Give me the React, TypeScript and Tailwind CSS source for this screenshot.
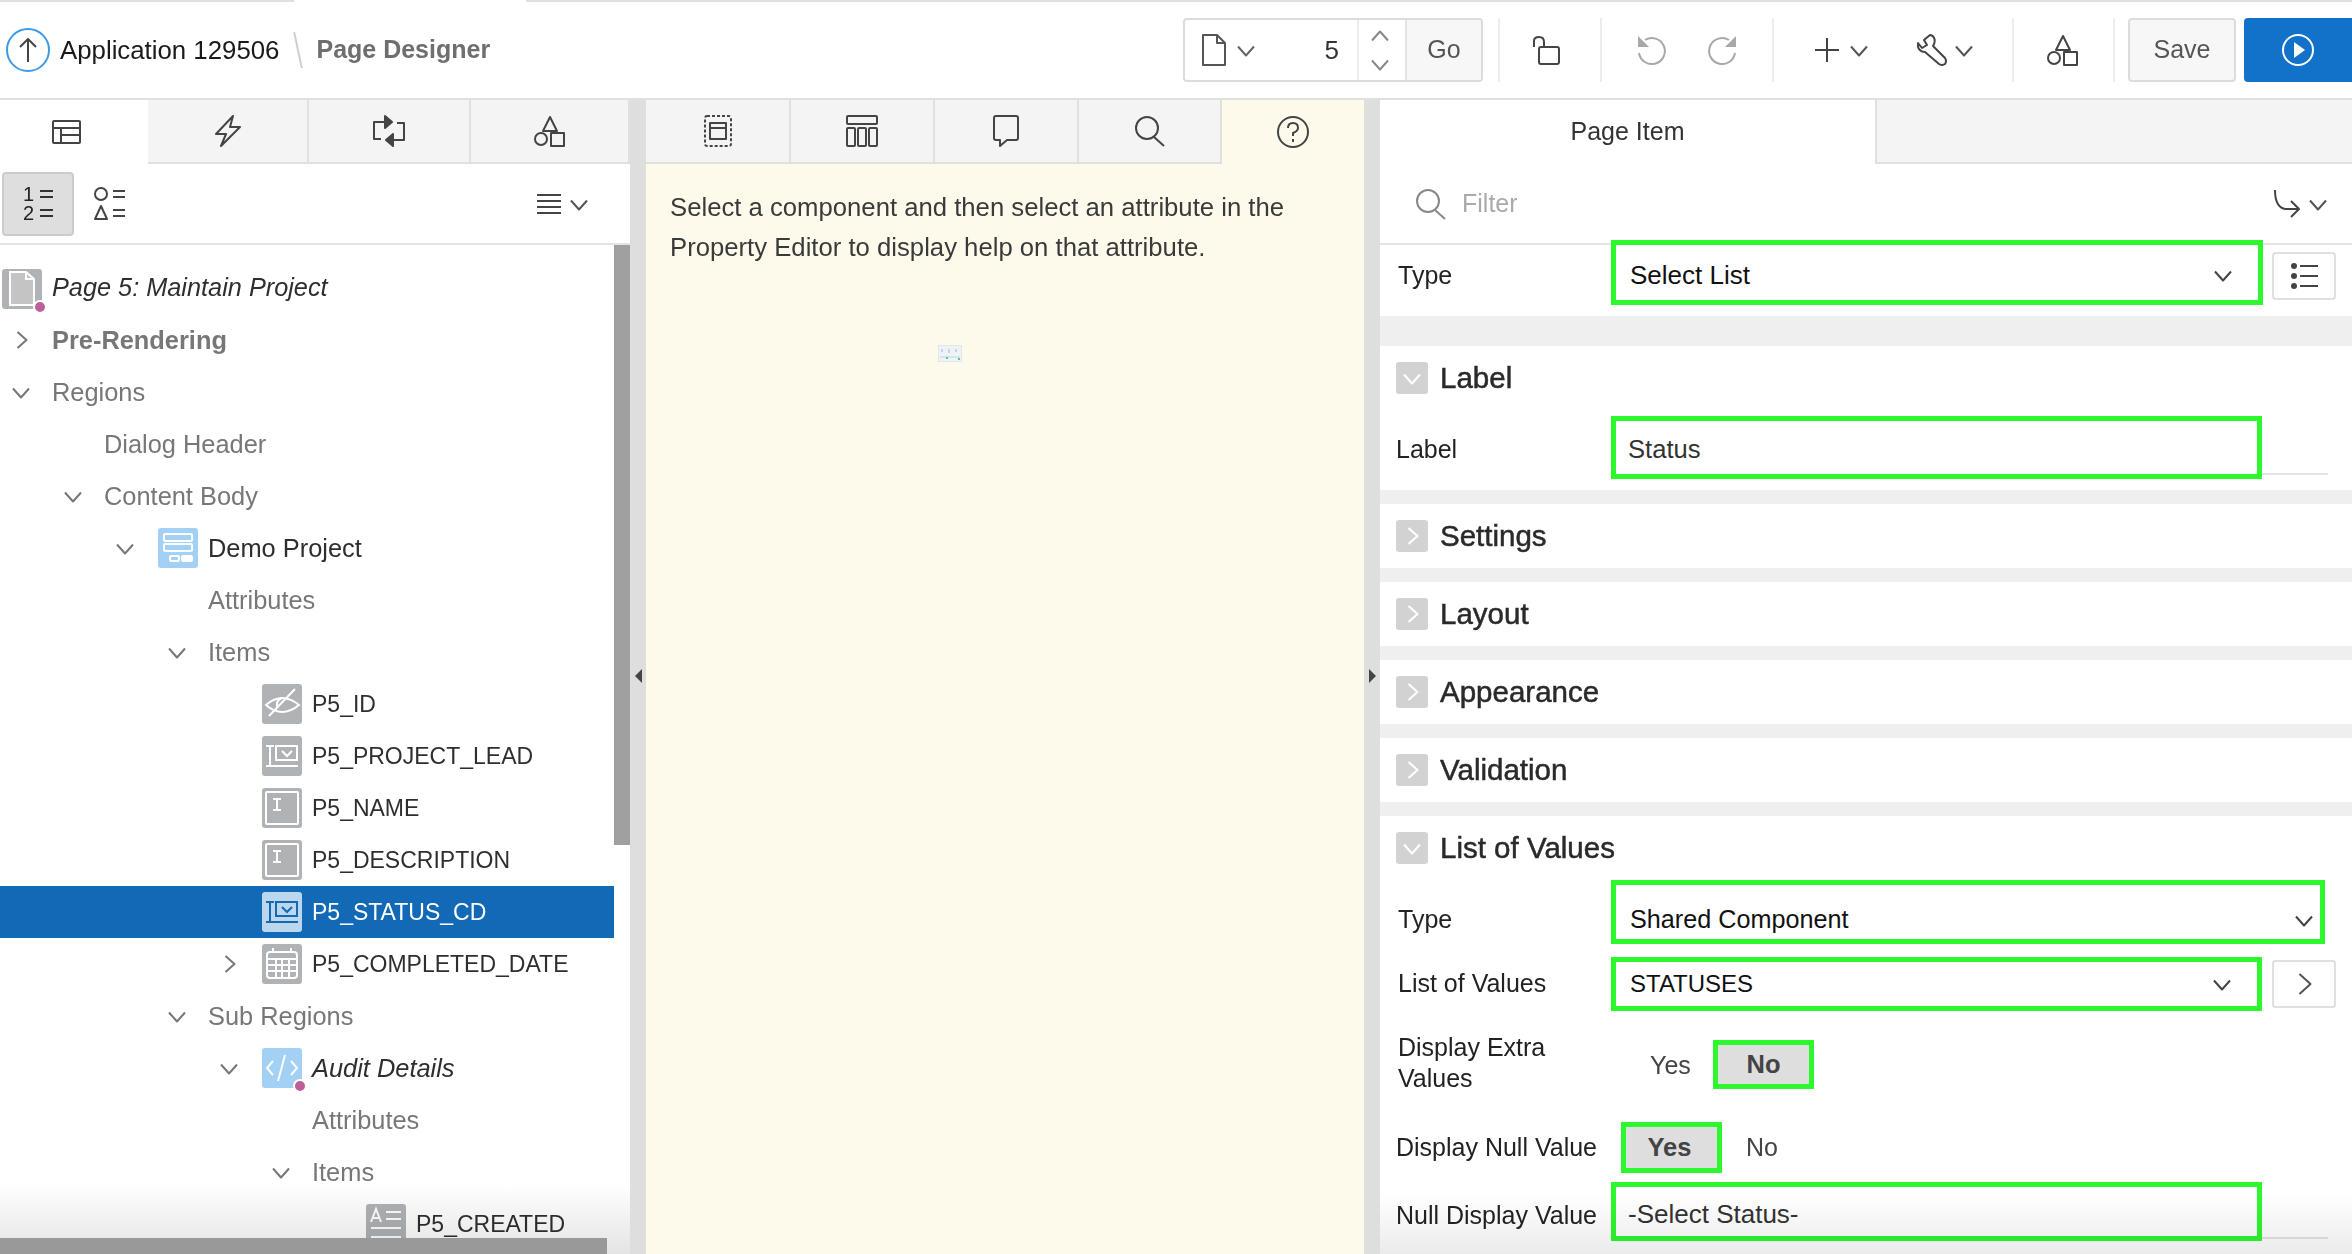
import type { ReactNode } from 'react';

function Svg({ w, h, children, className = '' }: { w: number; h: number; children: ReactNode; className?: string }) {
  return (
    <svg width={w} height={h} viewBox={`0 0 ${w} ${h}`} fill="none" stroke="currentColor" strokeWidth={2} strokeLinejoin="round" className={`shrink-0 ${className}`}>
      {children}
    </svg>
  );
}

function Chevron({ dir = 'down', size = 18, className = 'text-[#666666]' }: { dir?: 'down' | 'right' | 'up'; size?: number; className?: string }) {
  const half = size / 2;
  const q = size / 4;
  const d =
    dir === 'down'
      ? `M1 ${q + 1} L${half} ${size - q + 1} L${size - 1} ${q + 1}`
      : dir === 'up'
        ? `M1 ${size - q} L${half} ${q} L${size - 1} ${size - q}`
        : `M${q + 1} 1 L${size - q + 1} ${half} L${q + 1} ${size - 1}`;
  return (
    <Svg w={size} h={size} className={className}>
      <path d={d} />
    </Svg>
  );
}

function ShapesIcon() {
  return (
    <Svg w={32} h={32} className="text-[#444444]">
      <path d="M16 2 L23 16 L9 16 Z" />
      <circle cx={7} cy={24} r={6} />
      <rect x={17} y={18} width={13} height={13} />
    </Svg>
  );
}

function SearchIcon({ className }: { className: string }) {
  return (
    <Svg w={31} h={32} className={className}>
      <circle cx={13} cy={13} r={11} />
      <path d="M20 22 L30 31" />
    </Svg>
  );
}

function Separator() {
  return <div className="w-[2px] h-16 bg-[#ededed] shrink-0" />;
}

function Toolbar() {
  return (
    <div>
      <div className="flex h-[2px]">
        <div className="w-[294px] bg-[#e0e0e0]" />
        <div className="w-[232px] bg-white" />
        <div className="flex-1 bg-[#e0e0e0]" />
      </div>
      <div className="h-[98px] border-b-2 border-[#e0e0e0] flex items-center">
        <div className="ml-[6px] w-11 h-11 rounded-full border-2 border-[#3e9ae4] flex items-center justify-center text-[#444444] shrink-0">
          <Svg w={20} h={26}>
            <path d="M10 25 V2 M2 10 L10 2 L18 10" />
          </Svg>
        </div>
        <span className="ml-[10px] text-[25.8px] text-[#1a1a1a]">Application 129506</span>
        <div className="ml-[18px] w-[2px] h-9 bg-[#cfcfcf] skew-x-12" />
        <span className="ml-[17px] text-[25px] font-bold text-[#6e6e6e]">Page Designer</span>

        <div className="ml-auto w-[300px] h-16 border-2 border-[#dcdcdc] rounded flex items-stretch shrink-0">
          <div className="flex items-center pl-[17px] w-[172px]">
            <Svg w={24} h={32} className="text-[#555555]">
              <path d="M1 1 H15 L23 9 V31 H1 Z M15 1 V9 H23" />
            </Svg>
            <Chevron className="ml-[11px] text-[#666666]" />
            <span className="ml-auto mr-[18px] text-[26px] text-[#333333]">5</span>
          </div>
          <div className="w-[48px] border-l-2 border-[#ededed] pr-[4px] flex flex-col items-center justify-center gap-[10px]">
            <Chevron dir="up" className="text-[#888888]" />
            <Chevron className="text-[#888888]" />
          </div>
          <div className="flex-1 border-l-2 border-[#e4e4e4] bg-[#f7f7f7] flex items-center justify-center text-[25px] text-[#555555]">Go</div>
        </div>

        <div className="ml-[15px]"><Separator /></div>
        <div className="w-[100px] flex justify-center pr-[8px] text-[#444444]">
          <Svg w={27} h={29}>
            <path d="M1 11 V5 Q1 1 6 1 Q11 1 11 6 V11" />
            <rect x={6} y={11} width={20} height={17} rx={2} />
          </Svg>
        </div>
        <Separator />
        <div className="w-[170px] flex justify-center gap-[40px] text-[#a8a8a8]">
          <Svg w={30} h={32}>
            <path d="M8 6 A13 13 0 1 1 2 19" />
            <path d="M1 2 V13 H12 Z" fill="currentColor" stroke="none" />
          </Svg>
          <Svg w={30} h={32}>
            <path d="M22 6 A13 13 0 1 0 28 19" />
            <path d="M29 2 V13 H18 Z" fill="currentColor" stroke="none" />
          </Svg>
        </div>
        <Separator />
        <div className="w-[238px] flex items-center text-[#444444]">
          <div className="ml-[41px]">
            <Svg w={24} h={24}>
              <path d="M12 0 V24 M0 12 H24" />
            </Svg>
          </div>
          <Chevron className="ml-[11px] text-[#555555]" />
          <div className="ml-[49px]">
            <Svg w={31} h={32}>
              <path d="M13 1 L7 6 L10 11 L5 14 L1 9 C0 14 3 18 8 18 L22 30 Q25 32 28 30 Q30 27 28 24 L16 12 C19 7 18 2 13 1 Z" />
            </Svg>
          </div>
          <Chevron className="ml-[7px] text-[#555555]" />
        </div>
        <Separator />
        <div className="w-[99px] flex justify-center pr-[2px]"><ShapesIcon /></div>
        <Separator />
        <div className="ml-[13px] w-[108px] h-16 border-2 border-[#dcdcdc] rounded bg-[#f7f7f7] flex items-center justify-center text-[25px] text-[#555555] shrink-0">Save</div>
        <div className="ml-[8px] w-[108px] h-16 rounded-l bg-[#1271c8] flex items-center justify-center text-white shrink-0">
          <Svg w={32} h={32}>
            <circle cx={16} cy={16} r={15} />
            <path d="M12 8 L23 16 L12 24 Z" fill="currentColor" stroke="none" />
          </Svg>
        </div>
      </div>
    </div>
  );
}

function Tab({ active = false, width, children, bg = 'bg-white' }: { active?: boolean; width: string; children: ReactNode; bg?: string }) {
  return (
    <div
      className={`${width} h-16 flex items-center justify-center text-[#444444] ${
        active ? bg : 'bg-[#f4f4f4] border-b-2 border-r-2 border-[#e0e0e0]'
      }`}
    >
      {children}
    </div>
  );
}

const LEVEL_PAD: Record<number, string> = {
  0: 'pl-0',
  1: 'pl-[52px]',
  2: 'pl-[104px]',
  3: 'pl-[156px]',
  4: 'pl-[208px]',
  5: 'pl-[260px]',
  6: 'pl-[312px]',
};

type TreeRow = {
  label: string;
  level: number;
  arrow?: 'down' | 'right';
  icon?: ReactNode;
  tone?: 'muted' | 'ink' | 'bold' | 'italic';
  selected?: boolean;
};

function Tile({ children, bg = 'bg-[#b0b3b6]', dot = false }: { children: ReactNode; bg?: string; dot?: boolean }) {
  return (
    <div className={`relative w-10 h-10 rounded-[3px] text-white shrink-0 ${bg}`}>
      <svg width={40} height={40} viewBox="0 0 40 40" fill="none" stroke="currentColor" strokeWidth={2}>
        {children}
      </svg>
      {dot && <div className="absolute right-[-5px] bottom-[-5px] w-[14px] h-[14px] rounded-full bg-[#bd5f9a] border-2 border-white" />}
    </div>
  );
}

const selectGlyph = (
  <>
    <path d="M4 10 H12 M4 30 H36 M8 10 V30" />
    <rect x={14} y={10} width={21} height={14} />
    <path d="M20 15 L25 20 L30 15" />
  </>
);
const textGlyph = (
  <>
    <rect x={4} y={4} width={32} height={32} rx={1} />
    <path d="M11 11 H19 M11 22 H19 M15 11 V22" />
  </>
);

const ROWS: TreeRow[] = [
  { label: 'Pre-Rendering', level: 0, arrow: 'right', tone: 'bold' },
  { label: 'Regions', level: 0, arrow: 'down' },
  { label: 'Dialog Header', level: 1 },
  { label: 'Content Body', level: 1, arrow: 'down' },
  {
    label: 'Demo Project',
    level: 2,
    arrow: 'down',
    tone: 'ink',
    icon: (
      <Tile bg="bg-[#a3d0f5]">
        <rect x={6} y={6} width={28} height={7} rx={1} />
        <rect x={6} y={16} width={28} height={7} rx={1} />
        <rect x={12} y={28} width={9} height={5} rx={1} />
        <rect x={24} y={28} width={10} height={5} rx={1} fill="currentColor" />
      </Tile>
    ),
  },
  { label: 'Attributes', level: 3 },
  { label: 'Items', level: 3, arrow: 'down' },
  {
    label: 'P5_ID',
    level: 4,
    tone: 'ink',
    icon: (
      <Tile>
        <path d="M4 21 Q20 7 37 21 Q20 35 4 21 Z" />
        <path d="M20 14 Q14 16 15 23" />
        <path d="M33 5 L7 32" />
      </Tile>
    ),
  },
  { label: 'P5_PROJECT_LEAD', level: 4, tone: 'ink', icon: <Tile>{selectGlyph}</Tile> },
  { label: 'P5_NAME', level: 4, tone: 'ink', icon: <Tile>{textGlyph}</Tile> },
  { label: 'P5_DESCRIPTION', level: 4, tone: 'ink', icon: <Tile>{textGlyph}</Tile> },
  { label: 'P5_STATUS_CD', level: 4, selected: true, icon: <Tile bg="bg-[#bcd6ee] !text-[#1269b5]">{selectGlyph}</Tile> },
  {
    label: 'P5_COMPLETED_DATE',
    level: 4,
    arrow: 'right',
    tone: 'ink',
    icon: (
      <Tile>
        <rect x={5} y={8} width={30} height={26} rx={3} />
        <path d="M11 4 V9 M29 4 V9 M5 15 H35" />
        <path d="M6 21 H34 M6 27 H34 M14 16 V33 M20 16 V33 M27 16 V33" />
      </Tile>
    ),
  },
  { label: 'Sub Regions', level: 3, arrow: 'down' },
  {
    label: 'Audit Details',
    level: 4,
    arrow: 'down',
    tone: 'italic',
    icon: (
      <Tile bg="bg-[#a3d0f5]" dot>
        <path d="M11 13 L5 20 L11 27 M29 13 L35 20 L29 27 M23 7 L16 33" />
      </Tile>
    ),
  },
  { label: 'Attributes', level: 5 },
  { label: 'Items', level: 5, arrow: 'down' },
  {
    label: 'P5_CREATED',
    level: 6,
    tone: 'ink',
    icon: (
      <Tile>
        <path d="M5 18 L10 5 L15 18 M7 14 H13 M20 8 H35 M20 15 H35 M5 24 H35 M5 33 H35" />
      </Tile>
    ),
  },
];

const TONES = {
  muted: 'text-[#777777]',
  ink: 'text-[#2e2e2e]',
  bold: 'text-[#777777] font-bold',
  italic: 'text-[#2e2e2e] italic',
};

function TreeLine({ row }: { row: TreeRow }) {
  const size = row.label.startsWith('P5_') ? 'text-[23px]' : 'text-[25.4px]';
  return (
    <div className={`h-[52px] flex items-center ${size} ${LEVEL_PAD[row.level]} ${row.selected ? 'bg-[#1269b5] text-white' : TONES[row.tone ?? 'muted']}`}>
      <div className="w-[52px] flex justify-center pr-[10px] shrink-0">
        {row.arrow && <Chevron dir={row.arrow} className="text-[#777777]" />}
      </div>
      <div className={row.icon ? 'ml-[2px] w-[50px] shrink-0' : 'hidden'}>{row.icon}</div>
      <span className="whitespace-nowrap">{row.label}</span>
    </div>
  );
}

function NumberLine({ n }: { n: string }) {
  return (
    <div className="flex items-center h-[19px] w-[30px] justify-between text-[20px] text-[#222222]">
      <span>{n}</span>
      <div className="w-[13px] h-[8px] border-y-2 border-[#333333]" />
    </div>
  );
}

function LeftPanel() {
  return (
    <div className="w-[630px] shrink-0 flex flex-col relative overflow-hidden">
      <div className="flex">
        <Tab active width="w-[148px]">
          <div className="pr-[16px]">
            <Svg w={29} h={24}>
              <rect x={1} y={1} width={27} height={22} rx={1} />
              <path d="M1 8 H28 M9 8 V23 M9 15 H28" />
            </Svg>
          </div>
        </Tab>
        <Tab width="w-[161px]">
          <Svg w={28} h={32}>
            <path d="M19 1 L2 19 H12 L7 31 L26 12 H16 Z" />
          </Svg>
        </Tab>
        <Tab width="w-[162px]">
          <Svg w={34} h={32}>
            <path d="M15 7 H2 V24 H9 M19 25 H32 V8 H25" />
            <path d="M13 1 L20 7 L13 13 Z M21 19 L14 25 L21 31 Z" fill="currentColor" />
          </Svg>
        </Tab>
        <Tab width="w-[159px]"><ShapesIcon /></Tab>
      </div>
      <div className="h-[81px] border-b-2 border-[#e4e4e4] flex items-center pl-[2px] pr-[40px]">
        <div className="w-[72px] h-[64px] bg-[#dedede] border-2 border-[#cccccc] rounded flex flex-col items-center justify-center">
          <NumberLine n="1" />
          <NumberLine n="2" />
        </div>
        <div className="ml-[20px] text-[#444444]">
          <Svg w={32} h={36}>
            <circle cx={7} cy={8} r={6} />
            <path d="M19 5 H31 M19 11 H31 M19 24 H31 M19 30 H31" />
            <path d="M7 20 L13 33 H1 Z" />
          </Svg>
        </div>
        <div className="ml-auto flex items-center gap-[9px] text-[#444444] pr-[2px]">
          <Svg w={24} h={22}>
            <path d="M0 2 H24 M0 8 H24 M0 14 H24 M0 20 H24" />
          </Svg>
          <Chevron className="text-[#555555]" />
        </div>
      </div>
      <div className="w-[614px] flex-1">
        <div className="h-[84px] flex items-center pl-[2px] pt-[2px] text-[25.3px] italic text-[#2e2e2e]">
          <div className="mt-[1px]">
            <Tile dot>
              <path d="M8 3 H24 L32 10 V36 H8 Z" fill="#c4c4c4" />
              <path d="M24 3 V10 H32" />
            </Tile>
          </div>
          <span className="ml-[10px]">Page 5: Maintain Project</span>
        </div>
        <div className="-mt-[15px]">
          {ROWS.map((row, i) => (
            <TreeLine key={i} row={row} />
          ))}
        </div>
      </div>
      {/* scrollbars sit over the tree */}
      <div className="absolute right-0 top-[145px] w-4 h-[600px] bg-[#a0a0a0]" />
      <div className="absolute left-0 right-0 bottom-0 h-[70px] bg-gradient-to-b from-white to-[#e4e4e4] mix-blend-multiply" />
      <div className="absolute left-0 bottom-0 w-[607px] h-4 bg-[#999999]" />
    </div>
  );
}

function Splitter({ dir }: { dir: 'left' | 'right' }) {
  return (
    <div className="w-4 shrink-0 bg-[#dedede] flex items-center justify-center pb-[2px]">
      <div className={`w-0 h-0 border-y-[7px] border-y-transparent ${dir === 'left' ? 'border-r-[7px] border-r-[#444444]' : 'border-l-[7px] border-l-[#444444]'}`} />
    </div>
  );
}

function CenterPanel() {
  return (
    <div className="w-[718px] shrink-0 bg-[#fefaeb] flex flex-col">
      <div className="flex">
        <Tab width="w-[145px]">
          <Svg w={28} h={32}>
            <rect x={1} y={1} width={26} height={30} rx={2} strokeDasharray="3 2" />
            <rect x={6} y={8} width={16} height={16} />
            <path d="M6 13 H22" />
          </Svg>
        </Tab>
        <Tab width="w-[144px]">
          <Svg w={32} h={32}>
            <rect x={1} y={1} width={30} height={8} rx={1} />
            <rect x={1} y={13} width={8} height={18} rx={1} />
            <rect x={12} y={13} width={8} height={18} rx={1} />
            <rect x={23} y={13} width={8} height={18} rx={1} />
          </Svg>
        </Tab>
        <Tab width="w-[144px]">
          <Svg w={26} h={32}>
            <path d="M3 1 H23 Q25 1 25 3 V23 Q25 25 23 25 H14 L7 31 V25 H3 Q1 25 1 23 V3 Q1 1 3 1 Z" />
          </Svg>
        </Tab>
        <Tab width="w-[143px]"><SearchIcon className="text-[#444444]" /></Tab>
        <Tab active width="w-[142px]" bg="bg-[#fefaeb]">
          <Svg w={32} h={32}>
            <circle cx={16} cy={16} r={15} />
            <path d="M11 12 Q11 7 16 7 Q21 7 21 12 Q21 15 16 17 V20" />
            <path d="M16 23 V26" />
          </Svg>
        </Tab>
      </div>
      <div className="pt-[23px] pl-[24px] text-[25.7px] leading-10 text-[#3a3a3a] whitespace-nowrap">
        Select a component and then select an attribute in the<br />Property Editor to display help on that attribute.
      </div>
      <div className="mt-[78px] ml-[292px] w-6 h-[17px] bg-[#eef3f8] border border-[#dfe6ec]">
        <svg width={22} height={15} viewBox="0 0 22 15">
          <path d="M3 3 V6 M10 3 V7 M17 3 V6" stroke="#a9b4bd" strokeWidth={1} />
          <path d="M1 11 H21" stroke="#d5e4ee" strokeWidth={2} />
          <path d="M7 12 H9 M19 13 H21" stroke="#5cc48a" strokeWidth={2} />
        </svg>
      </div>
    </div>
  );
}

function GreenBox({ className, children }: { className: string; children: ReactNode }) {
  return <div className={`border-[5px] border-[#2df82d] shrink-0 relative bg-white ${className}`}>{children}</div>;
}

function SectionHeader({ title, open = false }: { title: string; open?: boolean }) {
  return (
    <div className="h-16 flex items-center pl-4 bg-white">
      <div className="w-8 h-8 rounded-[3px] bg-[#d2d2d2] flex items-center justify-center">
        <Chevron dir={open ? 'down' : 'right'} size={18} className="text-white" />
      </div>
      <span className="ml-[12px] text-[29.5px] text-[#2a2a2a] [-webkit-text-stroke:0.5px_#2a2a2a]">{title}</span>
    </div>
  );
}

function Band({ className = 'h-[14px]' }: { className?: string }) {
  return <div className={`bg-[#efefef] ${className}`} />;
}

function SelectValue({ text, className }: { text: string; className: string }) {
  return (
    <div className={`h-full flex items-center pl-[14px] text-[#111111] ${className}`}>
      {text}
      <Chevron className="ml-auto mr-[var(--chev)] text-[#444444]" />
    </div>
  );
}

function SideButton({ children, className }: { children: ReactNode; className: string }) {
  return <div className={`w-16 h-12 border-2 border-[#e0e0e0] rounded flex items-center justify-center text-[#444444] shrink-0 ${className}`}>{children}</div>;
}

const LABEL = 'text-[25px] leading-[28px] text-[#222222] whitespace-nowrap';

function RightPanel() {
  return (
    <div className="flex-1 relative overflow-hidden">
      <div className="flex">
        <div className="w-[495px] h-16 flex items-center justify-center text-[25px] text-[#333333]">Page Item</div>
        <div className="flex-1 h-16 bg-[#f4f4f4] border-b-2 border-l-2 border-[#e0e0e0]" />
      </div>
      <div className="h-[81px] border-b-2 border-[#e4e4e4] flex items-center pl-[35px] pr-[25px]">
        <SearchIcon className="text-[#888888]" />
        <span className="ml-[16px] text-[25px] text-[#aaaaaa]">Filter</span>
        <div className="ml-auto flex items-center gap-[8px] text-[#444444]">
          <Svg w={28} h={30}>
            <path d="M2 1 Q2 18 12 20 H26 M18 12 L26 20 L18 28" />
          </Svg>
          <Chevron className="text-[#555555]" />
        </div>
      </div>

      <div className="h-[71px] flex pl-[18px]">
        <span className={`w-[213px] pt-[16px] ${LABEL}`}>Type</span>
        <GreenBox className="w-[652px] h-[65px] -mt-[5px]">
          <SelectValue text="Select List" className="pt-[5px] text-[26px] [--chev:26px]" />
        </GreenBox>
        <SideButton className="ml-[9px] mt-[7px]">
          <Svg w={27} h={26}>
            <circle cx={3} cy={3} r={3} fill="currentColor" stroke="none" />
            <circle cx={3} cy={13} r={3} fill="currentColor" stroke="none" />
            <circle cx={3} cy={23} r={3} fill="currentColor" stroke="none" />
            <path d="M9 3 H27 M9 13 H27 M9 23 H27" />
          </Svg>
        </SideButton>
      </div>
      <Band className="h-[30px]" />

      <SectionHeader title="Label" open />
      <div className="h-[80px] flex pl-4">
        <span className={`w-[215px] pt-[25px] ${LABEL}`}>Label</span>
        <GreenBox className="w-[651px] h-[63px] mt-[6px]">
          <div className="h-full flex items-center pl-[12px] pt-[3px] text-[25.6px] text-[#333333]">Status</div>
        </GreenBox>
        <div className="w-[66px] h-[2px] bg-[#e4e4e4] mt-[63px]" />
      </div>
      <Band />
      <SectionHeader title="Settings" />
      <Band />
      <SectionHeader title="Layout" />
      <Band />
      <SectionHeader title="Appearance" />
      <Band />
      <SectionHeader title="Validation" />
      <Band />
      <SectionHeader title="List of Values" open />

      <div className="flex pl-[18px]">
        <span className={`w-[213px] pt-[25px] ${LABEL}`}>Type</span>
        <GreenBox className="w-[714px] h-16">
          <SelectValue text="Shared Component" className="pt-[16px] text-[25.2px] [--chev:7px]" />
        </GreenBox>
      </div>
      <div className="flex pl-[18px] mt-[13px]">
        <span className={`w-[213px] pt-[12px] ${LABEL}`}>List of Values</span>
        <GreenBox className="w-[651px] h-[54px]">
          <SelectValue text="STATUSES" className="text-[24px] [--chev:26px]" />
        </GreenBox>
        <SideButton className="ml-[10px] mt-[3px]">
          <Chevron dir="right" size={22} className="text-[#555555]" />
        </SideButton>
      </div>
      <div className="flex pl-[18px] mt-[29px]">
        <span className="w-[213px] -mt-[8px] text-[25px] leading-[31px] text-[#222222]">Display Extra<br />Values</span>
        <span className="w-[102px] pl-[39px] pt-[11px] text-[25px] leading-[28px] text-[#444444]">Yes</span>
        <GreenBox className="w-[101px] h-[49px] !bg-[#dedede]">
          <div className="h-full flex items-center justify-center text-[25.5px] font-bold text-[#444444]">No</div>
        </GreenBox>
      </div>
      <div className="flex pl-4 mt-[28px]">
        <span className={`w-[225px] pt-[11px] ${LABEL}`}>Display Null Value</span>
        <GreenBox className="w-[101px] h-[51px] !bg-[#dedede]">
          <div className="h-full flex items-center justify-center pr-[4px] text-[25.5px] font-bold text-[#444444]">Yes</div>
        </GreenBox>
        <span className="ml-[24px] pt-[11px] text-[25px] leading-[28px] text-[#444444]">No</span>
      </div>
      <div className="flex pl-4 mt-[9px]">
        <span className={`w-[215px] pt-[19px] ${LABEL}`}>Null Display Value</span>
        <GreenBox className="w-[651px] h-[59px]">
          <div className="h-full flex items-center pl-[12px] pt-[6px] text-[26px] text-[#333333]">-Select Status-</div>
        </GreenBox>
        <div className="w-[66px] h-[2px] bg-[#e4e4e4] mt-[55px]" />
      </div>
      <div className="absolute left-0 right-0 bottom-0 h-[60px] bg-gradient-to-b from-white to-[#ebebeb] mix-blend-multiply pointer-events-none" />
    </div>
  );
}

export default function App() {
  return (
    <div className="w-[2352px] h-[1254px] overflow-hidden bg-white flex flex-col font-['Liberation_Sans',Arial,sans-serif]">
      <Toolbar />
      <div className="flex-1 flex min-h-0">
        <LeftPanel />
        <Splitter dir="left" />
        <CenterPanel />
        <Splitter dir="right" />
        <RightPanel />
      </div>
    </div>
  );
}
